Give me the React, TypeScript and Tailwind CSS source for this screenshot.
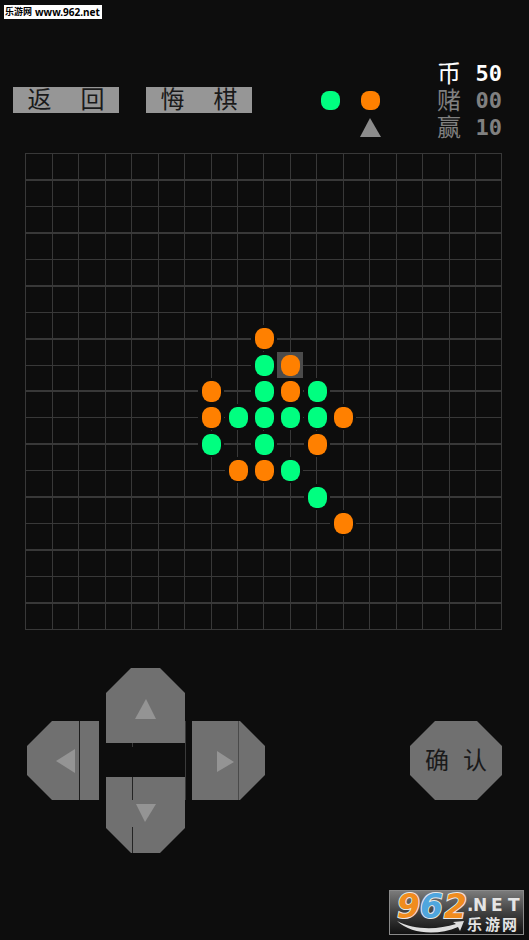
import React from "react";

const CELL = 26.44;
const LINES = Array.from({ length: 19 }, (_, i) => i);

const GREEN = "#00ff80";
const ORANGE = "#ff8000";

// [column, row, colour]
const stones: [number, number, string][] = [
  [9, 7, ORANGE],
  [9, 8, GREEN],
  [10, 8, ORANGE],
  [7, 9, ORANGE],
  [9, 9, GREEN],
  [10, 9, ORANGE],
  [11, 9, GREEN],
  [7, 10, ORANGE],
  [8, 10, GREEN],
  [9, 10, GREEN],
  [10, 10, GREEN],
  [11, 10, GREEN],
  [12, 10, ORANGE],
  [7, 11, GREEN],
  [9, 11, GREEN],
  [11, 11, ORANGE],
  [8, 12, ORANGE],
  [9, 12, ORANGE],
  [10, 12, GREEN],
  [11, 13, GREEN],
  [12, 14, ORANGE],
];

const scores = [
  { label: "币", value: "50", color: "text-white" },
  { label: "赌", value: "00", color: "text-[#808080]" },
  { label: "赢", value: "10", color: "text-[#808080]" },
];

function MenuButton({ chars }: { chars: string[] }) {
  return (
    <button
      type="button"
      className="grid h-[26px] w-[106px] shrink-0 grid-cols-2 bg-[#969696] text-center text-2xl leading-[26px] font-normal text-[#1a1a1a]"
    >
      {chars.map((c) => (
        <span key={c}>{c}</span>
      ))}
    </button>
  );
}

function Board() {
  return (
    <svg viewBox="0 0 477 477" className="block w-full" role="img" aria-label="棋盘">
      <g fill="#383838" shapeRendering="crispEdges">
        {LINES.map((i) => (
          <rect key={`v${i}`} x={Math.ceil(i * CELL)} y="0" width="1" height="477" />
        ))}
        {LINES.map((i) => (
          <rect
            key={`h${i}`}
            x="0"
            y={i % 2 ? Math.floor(i * CELL) : Math.round(i * CELL)}
            width="477"
            height={i % 2 ? 2 : 1}
          />
        ))}
      </g>
      {stones.map(([col, row, color]) => {
        const cx = Math.round(col * CELL) + 1;
        const cy = Math.round(row * CELL);
        const last = col === 10 && row === 8;
        return (
          <g key={`${col}-${row}`}>
            <rect x={cx - 13} y={cy - 13} width="26" height="26" fill={last ? "#4b4b4b" : "#0d0d0d"} />
            <rect x={cx - 9} y={cy - 10} width="19" height="21" rx="8" ry="9" fill={color} />
          </g>
        );
      })}
    </svg>
  );
}

function DPad() {
  return (
    <div className="flex items-center gap-[7px]">
      <button type="button" aria-label="左">
        <svg width="72" height="79" viewBox="0 0 72 79" className="block">
          <path d="M25 0H72V79H25L0 54V25Z" fill="#707070" />
          <path d="M52 0h1v79h-1z" fill="#1c1c1c" />
          <path d="M29 40L48 28V52Z" fill="#949494" />
        </svg>
      </button>
      <div className="flex flex-col">
        <button type="button" aria-label="上">
          <svg width="80" height="75" viewBox="0 0 80 75" className="block">
            <path d="M25 0H54L79 25V75H0V25Z" fill="#707070" />
            <path d="M79 53h1v22h-1z" fill="#3a3a3a" />
            <path d="M40 31L50 51H29Z" fill="#949494" />
          </svg>
        </button>
        <svg width="80" height="34" viewBox="0 0 80 34" className="block" aria-hidden="true">
          <path d="M79 0h1v34h-1zM26 0h1v4h-1z" fill="#3a3a3a" />
        </svg>
        <button type="button" aria-label="下">
          <svg width="80" height="76" viewBox="0 0 80 76" className="block">
            <path d="M0 0H79V51L54 76H25L0 51Z" fill="#707070" />
            <path d="M26 0h1v23h-1zM26 50h1v26h-1z" fill="#242424" />
            <path d="M79 0h1v23h-1z" fill="#3a3a3a" />
            <path d="M30 27H50L39 45Z" fill="#949494" />
          </svg>
        </button>
      </div>
      <button type="button" aria-label="右">
        <svg width="73" height="79" viewBox="0 0 73 79" className="-ml-px block">
          <path d="M0 0H48L73 25V54L48 79H0Z" fill="#707070" />
          <path d="M46 0h1v79h-1z" fill="#4a4a4a" />
          <path d="M25 30L42 41L25 51Z" fill="#949494" />
        </svg>
      </button>
    </div>
  );
}

function SiteLogo() {
  return (
    <a href="#site" aria-label="962.NET 乐游网">
      <svg width="135" height="45" viewBox="0 0 135 45" className="block overflow-visible">
        <defs>
          <linearGradient id="plate" x1="0" y1="0" x2="0" y2="1">
            <stop offset="0" stopColor="#7c7c7c" />
            <stop offset="0.5" stopColor="#404040" />
            <stop offset="1" stopColor="#101010" />
          </linearGradient>
        </defs>
        <rect x="0.5" y="0.5" width="134" height="44" fill="url(#plate)" stroke="#8a8a8a" />
        <path
          d="M8 31C22 44 48 46 69 37L71 41L75 31L64 32L67 34C48 40 25 40 8 31Z"
          fill="#dedede"
        />
        <g
          fontFamily="DejaVu Sans, sans-serif"
          fontSize="33"
          fontWeight="700"
          fontStyle="italic"
          stroke="#e8e8e8"
          strokeWidth="2"
          paintOrder="stroke"
        >
          <text x="8" y="28" fill="#f08c1e">9</text>
          <text x="31" y="28" fill="#4fa6de">6</text>
          <text x="55" y="28" fill="#f08c1e">2</text>
        </g>
        <g fill="#e4e4e4" fontWeight="700">
          <text y="21" fontFamily="DejaVu Sans, sans-serif" fontSize="17">
            <tspan x="78">.</tspan>
            <tspan x="84">N</tspan>
            <tspan x="102">E</tspan>
            <tspan x="119">T</tspan>
          </text>
          <text y="40" fontFamily="Noto Sans CJK SC, sans-serif" fontSize="15">
            <tspan x="78">乐</tspan>
            <tspan x="96">游</tspan>
            <tspan x="113">网</tspan>
          </text>
        </g>
      </svg>
    </a>
  );
}

export default function App() {
  return (
    <div className="flex min-h-screen flex-col bg-[#0d0d0d] font-['Liberation_Sans','Noto_Sans_CJK_SC',sans-serif]">
      <a
        href="#home"
        className="mt-[5px] ml-1 flex h-[14px] w-[98px] items-center gap-[3px] bg-white pl-px font-['Noto_Sans','Noto_Sans_CJK_SC',sans-serif] text-[10px] leading-[14px] font-bold whitespace-nowrap text-black"
      >
        <span className="text-[9px]">乐游网</span>
        <span>www.962.net</span>
      </a>

      <header className="mt-[41px] flex items-start pr-[27px] pl-[13px]">
        <div className="mt-[27px] flex gap-[27px]">
          <MenuButton chars={["返", "回"]} />
          <MenuButton chars={["悔", "棋"]} />
        </div>

        {/* whose turn */}
        <svg width="60" height="47" viewBox="0 0 60 47" className="mt-[31px] ml-[69px] shrink-0" role="img" aria-label="轮到橙方">
          <rect x="0" y="0" width="19" height="19" rx="8" fill={GREEN} />
          <rect x="40" y="0" width="19" height="19" rx="8" fill={ORANGE} />
          <path d="M49 27L60 46H39Z" fill="#8c8c8c" />
        </svg>

        <dl className="ml-auto">
          {scores.map((s) => (
            <div key={s.label} className={`flex h-[27px] items-center gap-[14px] ${s.color}`}>
              <dt className="w-[25px] text-center text-2xl leading-[26px] font-normal">{s.label}</dt>
              <dd className="font-['DejaVu_Sans_Mono',monospace] text-[22px] leading-[26px] font-bold">{s.value}</dd>
            </div>
          ))}
        </dl>
      </header>

      <main className="mt-3 pr-[27px] pl-[25px]">
        <Board />
      </main>

      <section className="mt-[38px] flex items-center justify-between pr-[27px] pl-[27px]">
        <DPad />
        <button
          type="button"
          className="flex h-[79px] w-[92px] items-center justify-center gap-[14px] bg-[#707070] text-2xl font-normal text-[#1a1a1a] [clip-path:polygon(25px_0,67px_0,92px_25px,92px_54px,67px_79px,25px_79px,0_54px,0_25px)]"
        >
          <span>确</span>
          <span>认</span>
        </button>
      </section>

      <footer className="mt-auto flex justify-end pr-[5px] pb-[5px]">
        <SiteLogo />
      </footer>
    </div>
  );
}
